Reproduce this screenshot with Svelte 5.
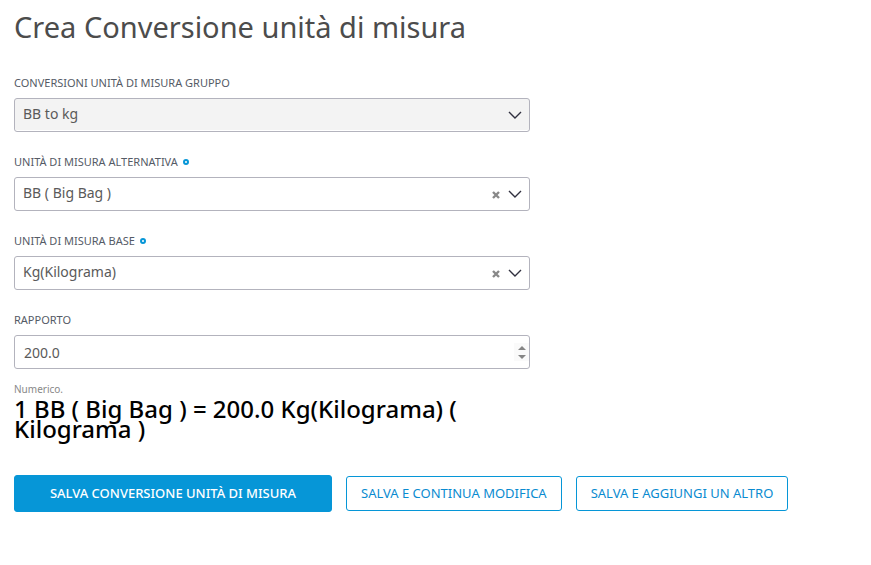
<script>
  const units = [
    { id: 'alternative', label: 'Unità di misura alternativa', value: 'BB ( Big Bag )' },
    { id: 'base', label: 'Unità di misura base', value: 'Kg(Kilograma)' }
  ];
  let selected = $state({ alternative: 'BB ( Big Bag )', base: 'Kg(Kilograma)' });
  let ratio = $state('200.0');

  function step(amount) {
    ratio = (Number(ratio) + amount).toFixed(1);
  }
</script>

{#snippet chevron()}
  <svg class="chevron" viewBox="0 0 14 8" aria-hidden="true"><path d="M1 1l6 6 6-6" /></svg>
{/snippet}

<main>
  <h1>Crea Conversione unità di misura</h1>
  <form onsubmit={(event) => event.preventDefault()}>
    <div class="fields">
      <div class="field">
        <label for="group">Conversioni unità di misura gruppo</label>
        <div class="control">
          <select id="group" disabled><option>BB to kg</option></select>
          {@render chevron()}
        </div>
      </div>

      {#each units as unit (unit.id)}
        <div class="field">
          <label for={unit.id}>{unit.label}<span class="required" aria-hidden="true"></span></label>
          <div class="control">
            <select id={unit.id} required bind:value={selected[unit.id]}>
              <option value=""></option>
              <option value={unit.value}>{unit.value}</option>
            </select>
            <button class="clear" type="button" aria-label="Cancella" onclick={() => (selected[unit.id] = '')}>
              <svg viewBox="0 0 8 8" aria-hidden="true"><path d="M1 1l6 6M7 1L1 7" /></svg>
            </button>
            {@render chevron()}
          </div>
        </div>
      {/each}

      <div class="field">
        <label for="ratio">Rapporto</label>
        <div class="control">
          <input id="ratio" type="text" inputmode="decimal" aria-describedby="ratio-help" bind:value={ratio} />
          <div class="stepper">
            <button type="button" aria-label="Aumenta" onclick={() => step(1)}>
              <svg viewBox="0 0 8 4" aria-hidden="true"><path d="M0 4l4-4 4 4z" /></svg>
            </button>
            <button type="button" aria-label="Diminuisci" onclick={() => step(-1)}>
              <svg viewBox="0 0 8 4" aria-hidden="true"><path d="M0 0l4 4 4-4z" /></svg>
            </button>
          </div>
        </div>
      </div>
      <p class="help" id="ratio-help">Numerico.</p>
      <p class="summary">1 {selected.alternative} = {ratio} {selected.base} ( Kilograma )</p>
    </div>

    <div class="actions">
      <button class="primary" type="submit">Salva conversione unità di misura</button>
      <button class="secondary" type="submit">Salva e continua modifica</button>
      <button class="secondary" type="submit">Salva e aggiungi un altro</button>
    </div>
  </form>
</main>

<style>
  :global(body) {
    background: #fff;
  }
  main {
    padding: 7px 14px;
    font-family: 'Noto Sans', 'Open Sans', sans-serif;
    color: #555;
  }
  h1 {
    margin: 0 0 28px;
    font-size: 29px;
    line-height: 40px;
    font-weight: 400;
    color: #4c4c4c;
  }
  .fields {
    max-width: 516px;
  }
  .field {
    margin-bottom: 22px;
  }
  label {
    display: flex;
    align-items: center;
    gap: 5px;
    margin-bottom: 7px;
    font-size: 11px;
    line-height: 16px;
    text-transform: uppercase;
    color: #555b66;
  }
  .required {
    box-sizing: border-box;
    width: 6px;
    height: 6px;
    border: 2px solid #0696d7;
    border-radius: 50%;
  }
  .control {
    position: relative;
    display: flex;
  }
  select,
  input {
    box-sizing: border-box;
    width: 100%;
    height: 34px;
    margin: 0;
    padding: 0 50px 0 9px;
    border: 1px solid #b3b3bd;
    border-radius: 3px;
    background: #fff;
    appearance: none;
    font-family: inherit;
    font-size: 14px;
    line-height: 20px;
    color: #5a5a5a;
  }
  select {
    padding: 0 50px 2px 8px;
  }
  select:disabled {
    background: #f3f3f3;
    opacity: 1;
    box-shadow: inset 0 -1px #fff;
  }
  .chevron {
    position: absolute;
    top: 13px;
    right: 8px;
    width: 14px;
    height: 8px;
    fill: none;
    stroke: #30303f;
    stroke-width: 1.4;
    pointer-events: none;
  }
  .clear {
    position: absolute;
    top: 10px;
    right: 27px;
    display: flex;
    align-items: center;
    justify-content: center;
    width: 14px;
    height: 16px;
    padding: 0;
    border: 0;
    background: none;
    cursor: pointer;
  }
  .clear svg {
    width: 8px;
    height: 8px;
    stroke: #888;
    stroke-width: 2.4;
  }
  .stepper {
    position: absolute;
    top: 8px;
    right: 1px;
    display: flex;
    flex-direction: column;
    width: 15px;
    height: 18px;
    background: #fafafa;
  }
  .stepper button {
    display: flex;
    flex: 1;
    align-items: center;
    justify-content: center;
    padding: 0;
    border: 0;
    background: none;
  }
  .stepper svg {
    width: 8px;
    height: 4px;
    fill: #858585;
  }
  .help {
    margin: -10px 0 2px;
    font-size: 10px;
    line-height: 16px;
    color: #888;
  }
  .summary {
    margin: 0;
    font-size: 24px;
    line-height: 20px;
    font-weight: 500;
    color: #000;
  }
  .actions {
    display: flex;
    flex-wrap: wrap;
    align-items: center;
    gap: 14px;
    margin-top: 36px;
  }
  .actions button {
    box-sizing: border-box;
    border: 1px solid #0696d7;
    border-radius: 3px;
    font-family: inherit;
    font-size: 13px;
    line-height: 17px;
    text-transform: uppercase;
    cursor: pointer;
  }
  .primary {
    min-width: 318px;
    padding: 9px 24px;
    background: #0696d7;
    font-weight: 500;
    color: #fff;
  }
  .secondary {
    padding: 8px 14px;
    background: #fff;
    color: #0a8bd0;
  }
</style>
